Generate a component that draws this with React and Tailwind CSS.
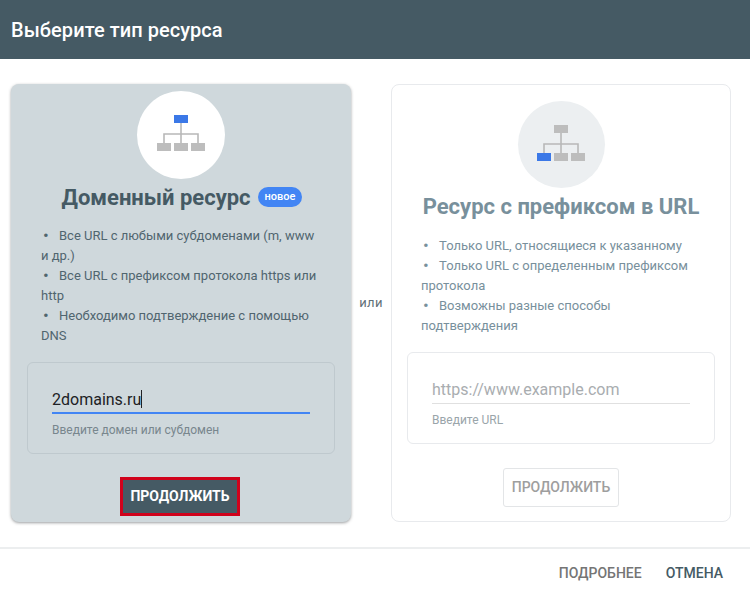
const SiteTree = ({ active }) => {
  const boxes = [
    { x: 0, y: 28, key: "left" },
    { x: 17, y: 28, key: "mid" },
    { x: 34, y: 28, key: "right" },
    { x: 17, y: 0, key: "top" },
  ];
  return (
    <svg width="48" height="36" viewBox="0 0 48 36">
      <path d="M24 8V28M7 28V19H41V28" fill="none" stroke="#b8b8b8" strokeWidth="1.6" />
      {boxes.map((b) => (
        <rect key={b.key} x={b.x} y={b.y} width="14" height="8" fill={b.key === active ? "#3b78e7" : "#bdbdbd"} />
      ))}
    </svg>
  );
};

const Bullet = ({ children }) => (
  <li>
    <span className="inline-block w-[18px] pl-[2px] text-[17px] leading-[0] align-[-1px]">•</span>
    {children}
  </li>
);

export default function App() {
  return (
    <div className="w-[750px] h-[597px] bg-white flex flex-col overflow-hidden font-['Roboto',sans-serif]">
      <header className="h-[59px] bg-[#455a64] flex items-center px-[11px]">
        <h1 className="text-[20px] font-medium tracking-[0.05px] text-white">Выберите тип ресурса</h1>
      </header>

      <main className="flex px-[11px] pt-[25px]">
        {/* domain card */}
        <section className="w-[340px] h-[438px] rounded-lg bg-[#cfd8dc] shadow-[0_1px_3px_rgba(60,64,67,0.5)] flex flex-col items-center pt-[7px]">
          <div className="w-[88px] h-[88px] pb-[4px] rounded-full bg-white flex items-center justify-center">
            <SiteTree active="top" />
          </div>
          <div className="mt-[1px] ml-[2px] h-[34px] flex items-center gap-[7px]">
            <h2 className="text-[22px] font-bold text-[#455a64]">Доменный ресурс</h2>
            <span className="h-[20px] px-[7px] rounded-full bg-[#4285f4] text-white text-[11px] font-medium flex items-center">новое</span>
          </div>
          <ul className="mt-[12px] w-full px-[30px] text-[13px] leading-[20px] text-[#50656f]">
            <Bullet>Все URL с любыми субдоменами (m, www и др.)</Bullet>
            <Bullet>Все URL с префиксом протокола https или http</Bullet>
            <Bullet>Необходимо подтверждение с помощью DNS</Bullet>
          </ul>
          <div className="mt-[16px] w-[308px] h-[92px] rounded-md border border-[#bfc9ce] px-[24px] pt-[25px]">
            <div className="h-[26px] border-b-2 border-[#4285f4] text-[16px] leading-[23px] text-[#202124]">
              2domains.ru<span className="inline-block w-px h-[18px] bg-[#202124] align-[-3px]"></span>
            </div>
            <p className="mt-[9px] text-[12px] leading-[14px] text-[#78868d]">Введите домен или субдомен</p>
          </div>
          <button className="mt-[23px] mr-[2px] w-[120px] h-[39px] border-[3px] border-[#d0021b] bg-[#455a64] text-white text-[14px] font-bold">ПРОДОЛЖИТЬ</button>
        </section>

        <div className="w-[40px] flex items-center justify-center text-[13px] tracking-[0.3px] text-[#5f6f77]">или</div>

        {/* url prefix card */}
        <section className="w-[340px] h-[438px] rounded-lg border border-[#e8eaed] flex flex-col items-center pt-[16px]">
          <div className="w-[87px] h-[87px] pb-[4px] rounded-full bg-[#eceff1] flex items-center justify-center">
            <SiteTree active="left" />
          </div>
          <h2 className="mt-[1px] h-[34px] flex items-center text-[22px] font-bold text-[#78909c]">Ресурс с префиксом в URL</h2>
          <ul className="mt-[13px] w-full px-[29px] text-[13px] leading-[20px] text-[#78909c]">
            <Bullet>Только URL, относящиеся к указанному</Bullet>
            <Bullet>Только URL с определенным префиксом протокола</Bullet>
            <Bullet>Возможны разные способы подтверждения</Bullet>
          </ul>
          <div className="mt-[16px] w-[308px] h-[92px] rounded-md border border-[#e8eaed] px-[24px] pt-[25px]">
            <div className="h-[26px] border-b border-[#e0e0e0] text-[16px] leading-[23px] text-[#a9adb0]">https://www.example.com</div>
            <p className="mt-[9px] text-[12px] leading-[14px] text-[#9aa5aa]">Введите URL</p>
          </div>
          <button className="mt-[24px] w-[116px] h-[39px] rounded-[3px] border border-[#e3e5e7] text-[#9e9e9e] text-[14px] font-medium">ПРОДОЛЖИТЬ</button>
        </section>
      </main>

      <footer className="mt-[25px] border-t-2 border-[#eceeef] h-[50px] flex items-center justify-end gap-[24px] pr-[27px] text-[14px] font-medium">
        <span className="text-[#757575]">ПОДРОБНЕЕ</span>
        <span className="text-[#455a64]">ОТМЕНА</span>
      </footer>
    </div>
  );
}
